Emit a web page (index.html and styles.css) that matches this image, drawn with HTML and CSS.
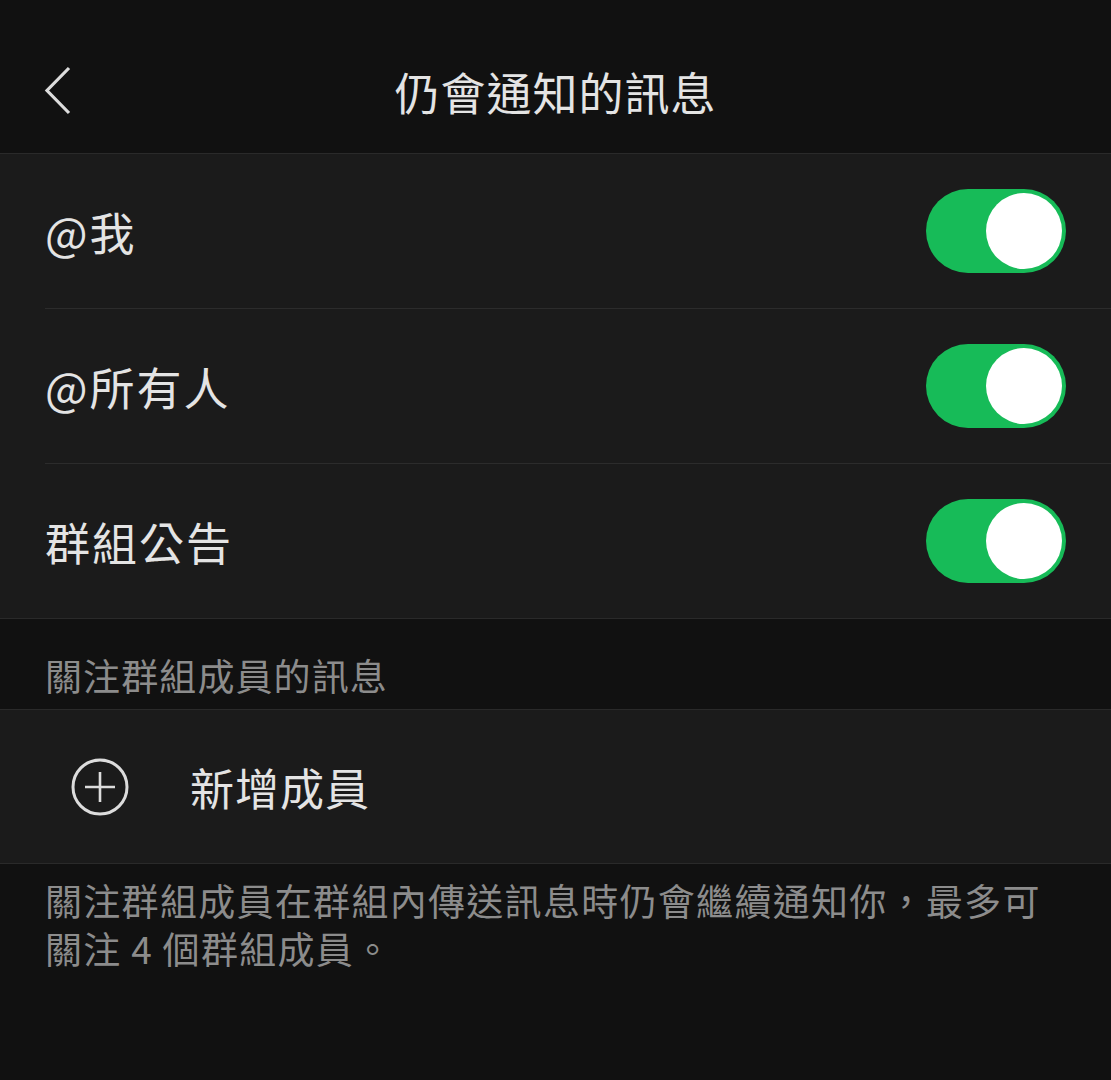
FILE: index.html
```html
<!DOCTYPE html>
<html>
<head>
	<title>仍會通知的訊息</title>
	<link rel="stylesheet" href="styles.css">
</head>
<body>
	<div class="header">
		<svg class="back" width="30" height="50" viewBox="0 0 30 50">
			<path d="M25 2 L3 24.5 L25 47" fill="none" stroke="#dcdcdc" stroke-width="3.2"/>
		</svg>
		<div class="title">仍會通知的訊息</div>
	</div>

	<div class="group">
		<div class="row">
			<span class="label">@我</span>
			<div class="toggle"><div class="knob"></div></div>
		</div>
		<div class="row">
			<span class="label">@所有人</span>
			<div class="toggle"><div class="knob"></div></div>
		</div>
		<div class="row">
			<span class="label">群組公告</span>
			<div class="toggle"><div class="knob"></div></div>
		</div>
	</div>

	<div class="section">關注群組成員的訊息</div>

	<div class="add">
		<svg class="plus" width="60" height="60" viewBox="0 0 60 60">
			<circle cx="30" cy="30" r="27" fill="none" stroke="#dcdcdc" stroke-width="3"/>
			<path d="M30 15 V45 M15 30 H45" stroke="#dcdcdc" stroke-width="2.6"/>
		</svg>
		<span class="add-text">新增成員</span>
	</div>

	<div class="note">
		<div>關注群組成員在群組內傳送訊息時仍會繼續通知你，最多可</div>
		<div>關注 4 個群組成員。</div>
	</div>
</body>
</html>
```

FILE: styles.css
```css
body{
	margin: 0;
	padding: 0;
	background: #111111;
	font-family: "Noto Sans CJK TC", "Noto Sans", sans-serif;
	color: #e4e4e4;
	min-height: 1080px;
}
.header{
	position: relative;
	height: 154px;
	display: flex;
	justify-content: center;
	align-items: center;
	padding-top: 30px;
	box-sizing: border-box;
	border-bottom: 1px solid #2a2a2a;
}
.back{
	position: absolute;
	left: 44px;
	top: 66px;
}
.title{
	font-size: 45px;
	line-height: 1;
	letter-spacing: 1px;
}
.group{
	background: #1b1b1b;
	border-bottom: 1px solid #2a2a2a;
}
.row{
	height: 154px;
	margin-left: 45px;
	padding-right: 45px;
	display: flex;
	align-items: center;
	justify-content: space-between;
	border-bottom: 1px solid #2c2c2c;
}
.row:last-child{
	border-bottom: none;
}
.label{
	font-size: 45px;
	letter-spacing: 2px;
}
.toggle{
	width: 140px;
	height: 84px;
	border-radius: 42px;
	background: #17bb58;
	display: flex;
	align-items: center;
	justify-content: flex-end;
	padding-right: 4px;
	box-sizing: border-box;
}
.knob{
	width: 76px;
	height: 76px;
	border-radius: 50%;
	background: #ffffff;
}
.section{
	height: 91px;
	box-sizing: border-box;
	padding: 0 45px 11px;
	display: flex;
	align-items: flex-end;
	font-size: 37px;
	line-height: 46px;
	letter-spacing: 1.1px;
	color: #8c8c8c;
	border-bottom: 1px solid #2a2a2a;
}
.add{
	height: 153px;
	background: #1b1b1b;
	display: flex;
	align-items: center;
	padding-left: 70px;
	border-bottom: 1px solid #2a2a2a;
}
.add-text{
	margin-left: 60px;
	font-size: 44px;
	letter-spacing: 1px;
}
.note{
	padding: 12px 45px 0;
	font-size: 37px;
	line-height: 48px;
	letter-spacing: 1.3px;
	color: #8c8c8c;
}
```
